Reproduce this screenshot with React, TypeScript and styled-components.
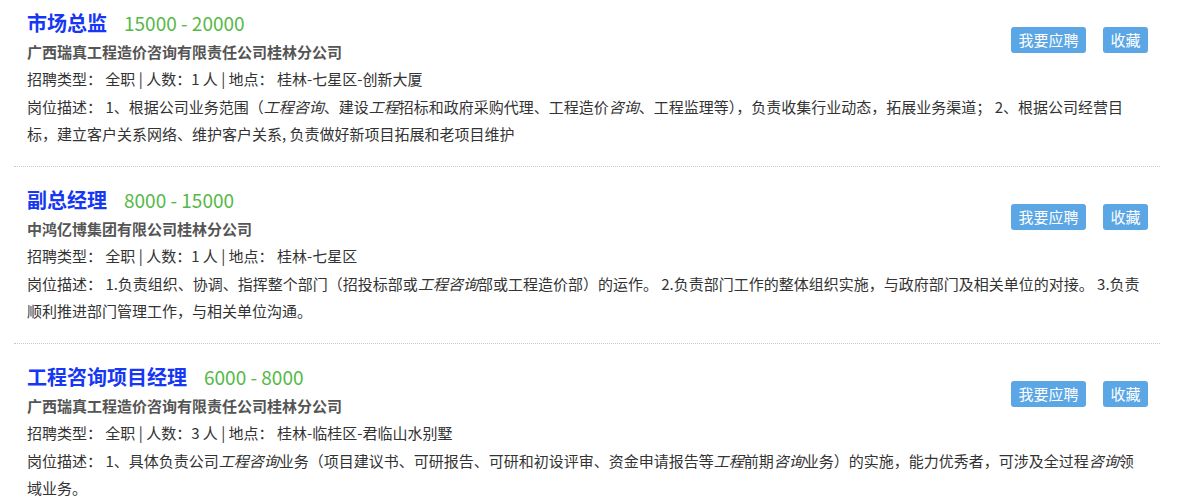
import React from "react";
import styled, { createGlobalStyle } from "styled-components";

const Global = createGlobalStyle`
  html, body { margin: 0; padding: 0; background: #fff; }
  body { font-family: "Noto Sans CJK SC", "Noto Sans", sans-serif; color: #333; }
`;

const List = styled.div`
  padding: 0 20px 0 14px;
  width: 1146px;
`;

const Item = styled.div`
  display: flow-root;
  padding: 18px 15px 19px 13px;
  border-top: 1px dotted #c8c8c8;
  &:first-child {
    border-top: none;
    padding-top: 8px;
  }
`;

const TitleRow = styled.div`
  height: 30px;
  line-height: 30px;
  white-space: nowrap;
`;

const Title = styled.a`
  font-size: 20px;
  font-weight: bold;
  color: #1637f3;
  text-decoration: none;
`;

const Salary = styled.span`
  font-size: 19px;
  color: #56b947;
  margin-left: 17px;
`;

const Company = styled.div`
  font-size: 15px;
  font-weight: bold;
  color: #555;
  line-height: 26px;
  margin-top: 1px;
`;

const Meta = styled.div`
  font-size: 15px;
  color: #333;
  line-height: 28px;
`;

const Desc = styled.div`
  font-size: 15px;
  color: #333;
  line-height: 27px;
  em { font-style: italic; }
`;

const Actions = styled.div`
  float: right;
  margin: 19px -3px 0 0;
  display: flex;
  gap: 17px;
`;

const Btn = styled.button`
  height: 26px;
  padding: 0 7.5px;
  border: none;
  border-radius: 3px;
  background: #5ba6e5;
  color: #fff;
  font-family: inherit;
  font-size: 15px;
  line-height: 26px;
  cursor: pointer;
`;

type Job = {
  title: string;
  salary: string;
  company: string;
  count: string;
  place: string;
  desc: React.ReactNode;
};

const jobs: Job[] = [
  {
    title: "市场总监",
    salary: "15000 - 20000",
    company: "广西瑞真工程造价咨询有限责任公司桂林分公司",
    count: "1",
    place: "桂林-七星区-创新大厦",
    desc: (
      <>
        1、根据公司业务范围（<em>工程咨询</em>、建设<em>工程</em>招标和政府采购代理、工程造价<em>咨询</em>、工程监理等），负责收集行业动态，拓展业务渠道； 2、根据公司经营目标，建立客户关系网络、维护客户关系, 负责做好新项目拓展和老项目维护
      </>
    ),
  },
  {
    title: "副总经理",
    salary: "8000 - 15000",
    company: "中鸿亿博集团有限公司桂林分公司",
    count: "1",
    place: "桂林-七星区",
    desc: (
      <>
        1.负责组织、协调、指挥整个部门（招投标部或<em>工程咨询</em>部或工程造价部）的运作。 2.负责部门工作的整体组织实施，与政府部门及相关单位的对接。 3.负责顺利推进部门管理工作，与相关单位沟通。
      </>
    ),
  },
  {
    title: "工程咨询项目经理",
    salary: "6000 - 8000",
    company: "广西瑞真工程造价咨询有限责任公司桂林分公司",
    count: "3",
    place: "桂林-临桂区-君临山水别墅",
    desc: (
      <>
        1、具体负责公司<em>工程咨询</em>业务（项目建议书、可研报告、可研和初设评审、资金申请报告等<em>工程</em>前期<em>咨询</em>业务）的实施，能力优秀者，可涉及全过程<em>咨询</em>领域业务。
      </>
    ),
  },
];

export default function App() {
  return (
    <>
      <Global />
      <List>
        {jobs.map((j) => (
          <Item key={j.title}>
            <Actions>
              <Btn>我要应聘</Btn>
              <Btn>收藏</Btn>
            </Actions>
            <TitleRow>
              <Title href="#">{j.title}</Title>
              <Salary>{j.salary}</Salary>
            </TitleRow>
            <Company>{j.company}</Company>
            <Meta>
              招聘类型： 全职 | 人数：{j.count} 人 | 地点： {j.place}
            </Meta>
            <Desc>岗位描述： {j.desc}</Desc>
          </Item>
        ))}
      </List>
    </>
  );
}
